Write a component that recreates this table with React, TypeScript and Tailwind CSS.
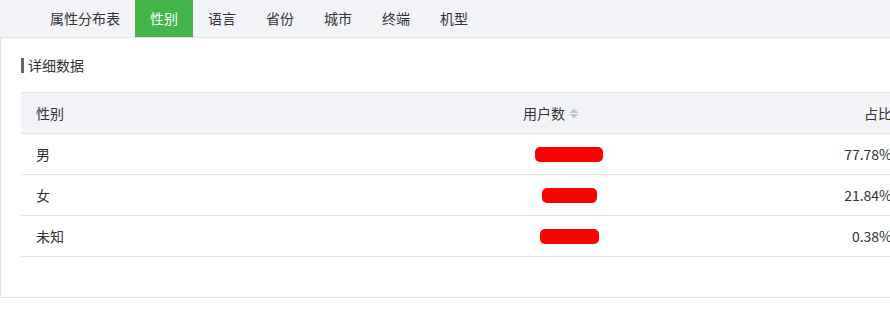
const tabs = ['属性分布表', '性别', '语言', '省份', '城市', '终端', '机型']

const rows = [
  { label: '男', bar: 68, pct: '77.78%' },
  { label: '女', bar: 55, pct: '21.84%' },
  { label: '未知', bar: 59, pct: '0.38%' },
]

const SortIcon = () => (
  <svg width="10" height="11" viewBox="0 0 10 11" className="ml-[4px]">
    <path d="M5 0.5 L9.5 5 H0.5 Z" fill="#c0c4cc" />
    <path d="M5 10.5 L9.5 6 H0.5 Z" fill="#c0c4cc" />
  </svg>
)

export default function App() {
  return (
    <div
      className="w-[890px] h-[333px] overflow-hidden bg-white text-[14px] text-[#333]"
      style={{ fontFamily: '"Noto Sans CJK SC", "Noto Sans", sans-serif' }}
    >
      <div className="w-[910px]">
        {/* Tabs */}
        <div className="flex h-[38px] pl-[35px] bg-[#f3f4f8] border-b border-[#e4e4e4]">
          {tabs.map((t, i) => (
            <div
              key={t}
              className={
                i === 1
                  ? 'h-[37px] px-[15px] flex items-center bg-[#44b549] text-white'
                  : 'h-[37px] px-[15px] flex items-center'
              }
            >
              {t}
            </div>
          ))}
        </div>

        {/* Panel */}
        <div className="border-l border-b border-[#e4e4e4] pt-[20px] pb-[40px] pl-[20px]">
          <div className="flex items-center h-[15px]">
            <div className="w-[3px] h-[15px] bg-[#666]"></div>
            <span className="ml-[4px] leading-[15px]">详细数据</span>
          </div>

          <div className="mt-[19px] border-t border-[#e4e4e4]">
            <div className="grid grid-cols-[355px_350px_182px] h-[41px] bg-[#f3f4f8] border-b border-[#e4e4e4] items-center">
              <div className="pl-[15px]">性别</div>
              <div className="flex items-center justify-center">
                用户数
                <SortIcon />
              </div>
              <div className="text-right pr-[16px]">占比</div>
            </div>
            {rows.map((r) => (
              <div
                key={r.label}
                className="grid grid-cols-[355px_350px_182px] h-[41px] border-b border-[#e4e4e4] items-center"
              >
                <div className="pl-[15px]">{r.label}</div>
                <div className="flex justify-center pl-[36px]">
                  <div className="h-[15px] rounded-[5px] bg-[#ff0000]" style={{ width: r.bar }}></div>
                </div>
                <div className="text-right pr-[16px]">{r.pct}</div>
              </div>
            ))}
          </div>
        </div>
      </div>
    </div>
  )
}
